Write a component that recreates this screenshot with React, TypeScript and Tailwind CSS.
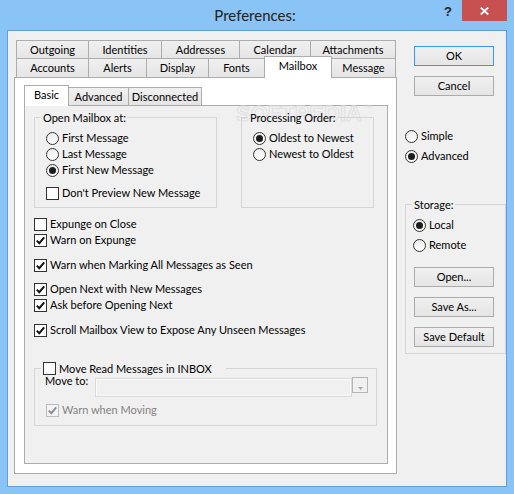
import React from "react";

const Radio = ({ checked }: { checked?: boolean }) => (
  <span className="w-[13px] h-[13px] shrink-0 rounded-full border border-[#333333] bg-gradient-to-b from-[#ececec] to-white flex items-center justify-center">
    {checked && <span className="w-[7px] h-[7px] rounded-full bg-[#1c1c1c]" />}
  </span>
);

const Check = ({ checked, disabled }: { checked?: boolean; disabled?: boolean }) => (
  <span
    className={
      disabled
        ? "w-[13px] h-[13px] shrink-0 border border-[#bcbcbc] bg-[#f4f4f4] flex items-center justify-center"
        : "w-[13px] h-[13px] shrink-0 border border-[#333333] bg-white flex items-center justify-center"
    }
  >
    {checked && (
      <svg width="11" height="11" viewBox="0 0 11 11">
        <path
          d="M1.8 5.6 L4.3 8.2 L9.2 2.4"
          fill="none"
          stroke={disabled ? "#8f8f8f" : "#111111"}
          strokeWidth="2"
        />
      </svg>
    )}
  </span>
);

const RadioRow = ({ label, checked, className = "" }: { label: string; checked?: boolean; className?: string }) => (
  <div className={"flex items-center h-[16px] gap-[3px] " + className}>
    <Radio checked={checked} />
    <span className="leading-[16px] whitespace-nowrap">{label}</span>
  </div>
);

const CheckRow = ({
  label,
  checked,
  disabled,
  className = "",
}: {
  label: string;
  checked?: boolean;
  disabled?: boolean;
  className?: string;
}) => (
  <div className={"flex items-center h-[16px] gap-[3px] " + className}>
    <Check checked={checked} disabled={disabled} />
    <span className={disabled ? "leading-[16px] whitespace-nowrap text-[#838383]" : "leading-[16px] whitespace-nowrap"}>
      {label}
    </span>
  </div>
);

const Button = ({ label, primary, className = "" }: { label: string; primary?: boolean; className?: string }) => (
  <div
    className={
      (primary ? "border-[#3399ff] " : "border-[#acacac] ") +
      "w-[80px] h-[20px] border bg-gradient-to-b from-[#f0f0f0] to-[#e5e5e5] flex items-center justify-center leading-[16px] " +
      className
    }
  >
    {label}
  </div>
);

const row1 = [
  { label: "Outgoing", w: "w-[72px]" },
  { label: "Identities", w: "w-[73px]" },
  { label: "Addresses", w: "w-[78px]" },
  { label: "Calendar", w: "w-[71px]" },
  { label: "Attachments", w: "w-[86px]" },
];

const tabBase =
  "h-full border-t border-l border-[#acacac] bg-gradient-to-b from-[#f0f0f0] to-[#e5e5e5] flex items-center justify-center whitespace-nowrap";

export default function App() {
  return (
    <div className="w-[514px] h-[494px] bg-[#8ac3f5] flex flex-col px-[7px] pb-[7px] font-['Lato',sans-serif] text-[11px] text-black">
      {/* title bar */}
      <div className="h-[30px] flex items-start -mx-[7px]">
        <div className="flex-1 h-full flex items-center justify-center pl-[76px] text-[15px] text-[#222222]">
          Preferences:
        </div>
        <div className="w-[28px] h-[21px] flex items-center justify-center pt-[3px] font-bold text-[13px] text-[#222222] font-['Liberation_Sans',sans-serif]">
          ?
        </div>
        <div className="w-[45px] h-[21px] bg-[#c75050] flex items-center justify-center pt-[1px]">
          <svg width="9" height="8" viewBox="0 0 9 8">
            <path d="M0.8 0.5 L8.2 7.5 M8.2 0.5 L0.8 7.5" stroke="#ffffff" strokeWidth="1.8" fill="none" />
          </svg>
        </div>
        <div className="w-[7px]" />
      </div>

      {/* client */}
      <div className="flex-1 border border-[#5f9fd9] bg-[#f0f0f0] flex">
        {/* tab control */}
        <div className="ml-[6px] mt-[9px] w-[383px] flex flex-col">
          <div className="h-[18px] flex pl-[2px] pr-[1px]">
            {row1.map((t, i) => (
              <div key={t.label} className={tabBase + " pt-[2px] " + t.w + (i === row1.length - 1 ? " border-r" : "")}>
                {t.label}
              </div>
            ))}
          </div>
          <div className="h-[19px] flex items-end pl-[2px] pr-[1px] relative z-10">
            <div className={tabBase + " w-[72px]"}>Accounts</div>
            <div className={tabBase + " w-[58px]"}>Alerts</div>
            <div className={tabBase + " w-[62px]"}>Display</div>
            <div className={tabBase + " w-[56px]"}>Fonts</div>
            <div className="w-[68px] h-[22px] -mb-px border-t border-x border-[#acacac] bg-white flex items-center justify-center pb-[2px]">
              Mailbox
            </div>
            <div className="w-[64px] h-full border-t border-r border-[#acacac] bg-gradient-to-b from-[#f0f0f0] to-[#e5e5e5] flex items-center justify-center">
              Message
            </div>
          </div>

          {/* outer panel */}
          <div className="h-[397px] border border-[#acacac] bg-white pl-[9px] pr-[8px] pt-[7px] pb-[9px] flex flex-col">
            <div className="h-[20px] flex items-end relative z-10">
              <div className="w-[45px] h-[21px] -mb-px border-t border-x border-[#acacac] bg-white flex items-center justify-center pb-[1px]">
                Basic
              </div>
              <div className="w-[60px] h-[18px] border-t border-r border-[#acacac] bg-gradient-to-b from-[#f0f0f0] to-[#e5e5e5] flex items-center justify-center pt-[1px]">
                Advanced
              </div>
              <div className="w-[73px] h-[18px] border-t border-r border-[#acacac] bg-gradient-to-b from-[#f0f0f0] to-[#e5e5e5] flex items-center justify-center pt-[1px]">
                Disconnected
              </div>
            </div>

            {/* inner panel */}
            <div className="flex-1 border border-[#acacac] bg-[#f0f0f0] relative z-0 pl-[9px] pt-[4px] flex flex-col">
              <div className="absolute left-[211px] top-[-3px] -z-10 flex items-start font-['Liberation_Sans',sans-serif] font-bold text-[22px] leading-[22px] text-transparent [-webkit-text-stroke:1px_#e0e0e0] pointer-events-none">
                <span>SOFTPEDIA</span>
                <span className="text-[8px] leading-[8px] ml-[2px] mt-[1px] font-normal [-webkit-text-stroke:0px] text-[#dadada]">™</span>
              </div>

              <div className="flex">
                <fieldset className="w-[183px] border border-[#d5d5d5] min-w-0">
                  <legend className="ml-[6px] px-[2px] leading-[15px]">Open Mailbox at:</legend>
                  <div className="pl-[11px] pt-[5px] pb-[6px]">
                    <RadioRow label="First Message" />
                    <RadioRow label="Last Message" />
                    <RadioRow label="First New Message" checked />
                    <CheckRow label="Don't Preview New Message" className="mt-[7px]" />
                  </div>
                </fieldset>
                <fieldset className="ml-[24px] w-[133px] border border-[#d5d5d5] min-w-0">
                  <legend className="ml-[6px] px-[2px] leading-[15px]">Processing Order:</legend>
                  <div className="pl-[11px] pt-[5px]">
                    <RadioRow label="Oldest to Newest" checked />
                    <RadioRow label="Newest to Oldest" />
                  </div>
                </fieldset>
              </div>

              <CheckRow label="Expunge on Close" className="mt-[8px]" />
              <CheckRow label="Warn on Expunge" checked />
              <CheckRow label="Warn when Marking All Messages as Seen" checked className="mt-[9px]" />
              <CheckRow label="Open Next with New Messages" checked className="mt-[8px]" />
              <CheckRow label="Ask before Opening Next" checked />
              <CheckRow label="Scroll Mailbox View to Expose Any Unseen Messages" checked className="mt-[9px]" />

              <fieldset className="mt-[23px] w-[343px] border border-[#d5d5d5] min-w-0">
                <legend className="ml-[6px] pl-[2px] pr-[14px] h-[15px] flex items-center gap-[3px]">
                  <Check />
                  <span className="leading-[15px] whitespace-nowrap">Move Read Messages in INBOX</span>
                </legend>
                <div className="pb-[7px]">
                  <div className="flex items-start pl-[10px]">
                    <span className="w-[50px] -mt-[2px] leading-[14px] whitespace-nowrap">Move to:</span>
                    <div className="mt-[2px] w-[257px] h-[19px] border border-[#d9d9d9] bg-[#f0f0f0] shadow-[inset_1px_1px_0_#fafafa,inset_-1px_-1px_0_#fafafa]" />
                    <div className="mt-[1px] w-[16px] h-[16px] border border-[#b5b5b5] bg-[#f0f0f0] flex items-end justify-center pb-[2px]">
                      <svg width="5" height="3" viewBox="0 0 5 3">
                        <path d="M0 0 L5 0 L2.5 3 Z" fill="#a8a8a8" />
                      </svg>
                    </div>
                  </div>
                  <CheckRow label="Warn when Moving" checked disabled className="mt-[5px] pl-[11px]" />
                </div>
              </fieldset>
            </div>
          </div>
        </div>

        {/* right column */}
        <div className="ml-[8px] w-[101px] flex flex-col">
          <Button label="OK" primary className="mt-[15px] ml-[9px]" />
          <Button label="Cancel" className="mt-[10px] ml-[9px]" />
          <RadioRow label="Simple" className="mt-[32px]" />
          <RadioRow label="Advanced" checked className="mt-[4px]" />
          <fieldset className="mt-[33px] w-[101px] border border-[#d5d5d5] min-w-0">
            <legend className="ml-[6px] px-[2px] leading-[15px]">Storage:</legend>
            <div className="pl-[7px] pt-[5px] pb-[6px]">
              <RadioRow label="Local" checked />
              <RadioRow label="Remote" className="mt-[4px]" />
              <Button label="Open..." className="mt-[14px] ml-[1px]" />
              <Button label="Save As..." className="mt-[10px] ml-[1px]" />
              <Button label="Save Default" className="mt-[10px] ml-[1px]" />
            </div>
          </fieldset>
        </div>
      </div>
    </div>
  );
}
